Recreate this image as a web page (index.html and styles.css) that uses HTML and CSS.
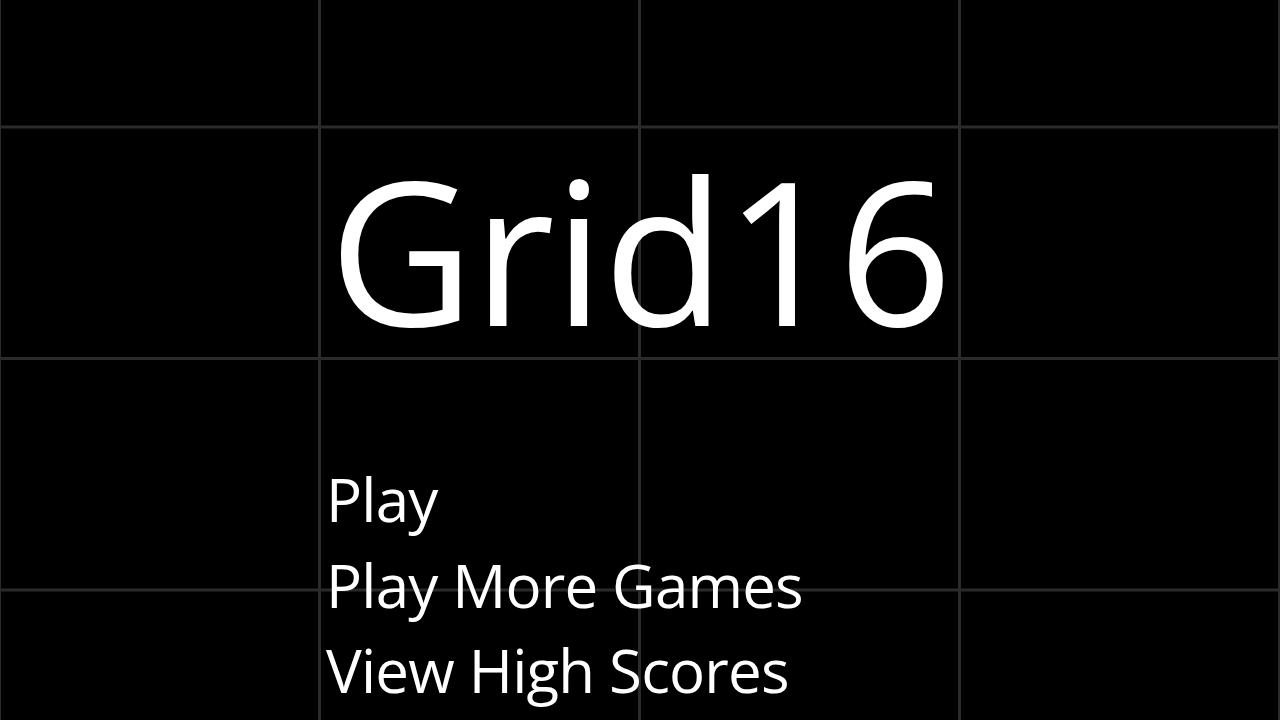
FILE: index.html
```html
<!DOCTYPE html>
<html lang="en">
<head>
    <meta charset="UTF-8">
    <meta name="viewport" content="width=device-width, initial-scale=1.0">
    <title>Grid16</title>
    <link rel="stylesheet" href="styles.css">
</head>
<body>
    <div class="screen">
        <h1 class="title">Grid16</h1>
        <ul class="menu">
            <li><a href="#">Play</a></li>
            <li><a href="#">Play More Games</a></li>
            <li><a href="#">View High Scores</a></li>
        </ul>
    </div>
</body>
</html>
```

FILE: styles.css
```css
html, body {
    margin: 0;
    height: 100%;
    background-color: #000;
}

body {
    font-family: "Open Sans", sans-serif;
    color: #fff;
    overflow: hidden;
}

.screen {
    width: 1280px;
    height: 720px;
    background-color: #000;
    background-image:
        linear-gradient(to right, #2b2b2b 3px, transparent 3px),
        linear-gradient(to bottom, #2b2b2b 3px, transparent 3px);
    background-size: 320px 231.5px;
    background-position: -2px -106px;
    display: flex;
    flex-direction: column;
}

.title {
    margin: 134px 0 0;
    font-size: 200px;
    font-weight: 400;
    line-height: 230px;
    text-align: center;
    letter-spacing: -1px;
}

.menu {
    list-style: none;
    margin: 93px 0 0 326px;
    padding: 0;
}

.menu li {
    font-size: 60px;
    line-height: 85.5px;
    letter-spacing: -0.8px;
}

.menu a {
    color: #fff;
    text-decoration: none;
}
```
